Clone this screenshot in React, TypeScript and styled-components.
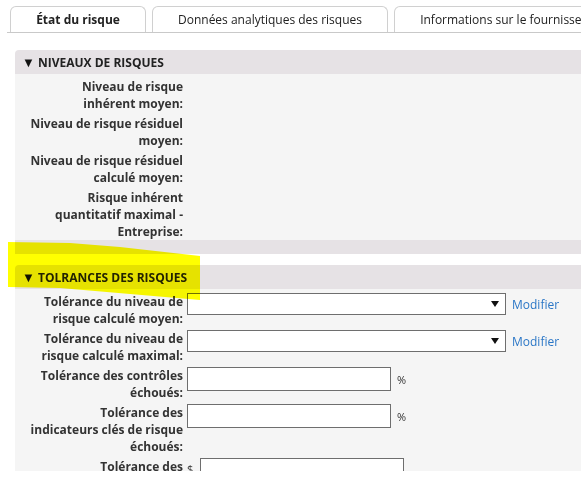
import React from "react";
import styled, { createGlobalStyle } from "styled-components";

const GlobalStyle = createGlobalStyle`
    body {
        margin: 0;
        background: #ffffff;
        font-family: "Open Sans", "Liberation Sans", sans-serif;
        font-size: 12px;
        color: #222;
    }
`;

interface Field {
    label: string[];
    kind?: "select" | "percent" | "money";
}

const levels: Field[] = [
    { label: ["Niveau de risque", "inhérent moyen:"] },
    { label: ["Niveau de risque résiduel", "moyen:"] },
    { label: ["Niveau de risque résiduel", "calculé moyen:"] },
    { label: ["Risque inhérent", "quantitatif maximal -", "Entreprise:"] },
];

const tolerances: Field[] = [
    { label: ["Tolérance du niveau de", "risque calculé moyen:"], kind: "select" },
    { label: ["Tolérance du niveau de", "risque calculé maximal:"], kind: "select" },
    { label: ["Tolérance des contrôles", "échoués:"], kind: "percent" },
    { label: ["Tolérance des", "indicateurs clés de risque", "échoués:"], kind: "percent" },
    { label: ["Tolérance des", "pertes:"], kind: "money" },
];

const tabs = ["État du risque", "Données analytiques des risques", "Informations sur le fournisseur"];
const tabWidths = [136, 236, 226];

const App: React.FC = () => {
    const renderValue = (kind?: Field["kind"]) => {
        if (kind === "select")
            return (
                <>
                    <SelectBox>
                        <Arrow />
                    </SelectBox>
                    <EditLink href="#">Modifier</EditLink>
                </>
            );
        if (kind === "percent")
            return (
                <>
                    <TextBox />
                    <Unit>%</Unit>
                </>
            );
        if (kind === "money")
            return (
                <>
                    <Currency>$</Currency>
                    <TextBox />
                </>
            );
        return null;
    };

    return (
        <Page>
            <GlobalStyle />
            <TabBar>
                {tabs.map((t, i) => (
                    <Tab key={t} $active={i === 0} $width={tabWidths[i]}>
                        {t}
                    </Tab>
                ))}
            </TabBar>

            <Panel>
                <PanelHeader>
                    <Caret>▼</Caret>Niveaux de risques
                </PanelHeader>
                <PanelBody>
                    {levels.map((f) => (
                        <Row key={f.label.join(" ")}>
                            <Label>
                                {f.label.map((l) => (
                                    <div key={l}>{l}</div>
                                ))}
                            </Label>
                            <Value />
                        </Row>
                    ))}
                </PanelBody>
                <PanelFooter />
            </Panel>

            <Panel>
                <PanelHeader>
                    <Caret>▼</Caret>Tolrances des risques
                </PanelHeader>
                <PanelBody $tall>
                    {tolerances.map((f) => (
                        <Row key={f.label.join(" ")}>
                            <Label>
                                {f.label.map((l) => (
                                    <div key={l}>{l}</div>
                                ))}
                            </Label>
                            <Value>{renderValue(f.kind)}</Value>
                        </Row>
                    ))}
                </PanelBody>
            </Panel>

            {/* highlighter mark drawn over the screenshot */}
            <Highlight width="210" height="70" viewBox="0 0 210 70">
                <polygon points="8,12 70,13 120,17 200,26 200,70 130,64 60,58 8,57" fill="#ffff00" />
            </Highlight>
        </Page>
    );
};

const Page = styled.div`
    position: relative;
    width: 100%;
    height: 471px;
    overflow: hidden;
`;

const TabBar = styled.div`
    display: flex;
    gap: 6px;
    margin-left: 7px;
    padding: 6px 0 0 3px;
    border-bottom: 1px solid #c9c9c9;
    white-space: nowrap;
`;

const Tab = styled.div<{ $active?: boolean; $width: number }>`
    flex: 0 0 auto;
    box-sizing: border-box;
    width: ${(p) => p.$width}px;
    height: 26px;
    line-height: 25px;
    text-align: center;
    background: #fff;
    border: 1px solid #d0d0d0;
    border-bottom: none;
    border-radius: 6px 6px 0 0;
    font-size: 12px;
    font-weight: ${(p) => (p.$active ? 700 : 400)};
    color: #222;
    overflow: hidden;
`;

const Panel = styled.section`
    margin-left: 15px;
    margin-top: 17px;
    & + & {
        margin-top: 11px;
    }
`;

const PanelHeader = styled.div`
    display: flex;
    align-items: center;
    height: 24px;
    padding-left: 7px;
    background: #e6e2e5;
    border-radius: 4px 0 0 0;
    font-weight: 700;
    font-size: 12px;
    text-transform: uppercase;
    color: #222;
`;

const Caret = styled.span`
    font-size: 13px;
    width: 16px;
    color: #111;
`;

const PanelBody = styled.div<{ $tall?: boolean }>`
    display: flex;
    flex-direction: column;
    gap: 3px;
    padding: 4px 0 ${(p) => (p.$tall ? "40px" : "0")};
    background: #f5f5f5;
`;

const PanelFooter = styled.div`
    height: 14px;
    background: #e6e2e5;
`;

const Row = styled.div`
    display: grid;
    grid-template-columns: 168px 1fr;
    column-gap: 4px;
    align-items: start;
`;

const Label = styled.div`
    text-align: right;
    font-weight: 700;
    font-size: 12px;
    line-height: 17px;
    color: #333;
`;

const Value = styled.div`
    display: flex;
    align-items: center;
    min-height: 20px;
`;

const SelectBox = styled.div`
    position: relative;
    box-sizing: border-box;
    width: 319px;
    height: 22px;
    background: #fff;
    border: 1px solid #6e6e6e;
`;

const Arrow = styled.span`
    position: absolute;
    right: 6px;
    top: 7px;
    width: 0;
    height: 0;
    border-left: 4px solid transparent;
    border-right: 4px solid transparent;
    border-top: 6px solid #111;
`;

const EditLink = styled.a`
    margin-left: 6px;
    color: #2a76c6;
    font-size: 12px;
    text-decoration: none;
`;

const TextBox = styled.div`
    box-sizing: border-box;
    width: 204px;
    height: 24px;
    background: #fff;
    border: 1px solid #6e6e6e;
`;

const Unit = styled.span`
    margin-left: 6px;
    font-size: 11px;
    color: #333;
    align-self: center;
`;

const Currency = styled.span`
    width: 13px;
    font-size: 11px;
    line-height: 14px;
    color: #333;
    padding-top: 4px;
    align-self: flex-start;
`;

const Highlight = styled.svg`
    position: absolute;
    left: 0;
    top: 230px;
    mix-blend-mode: multiply;
    pointer-events: none;
`;

export default App;
